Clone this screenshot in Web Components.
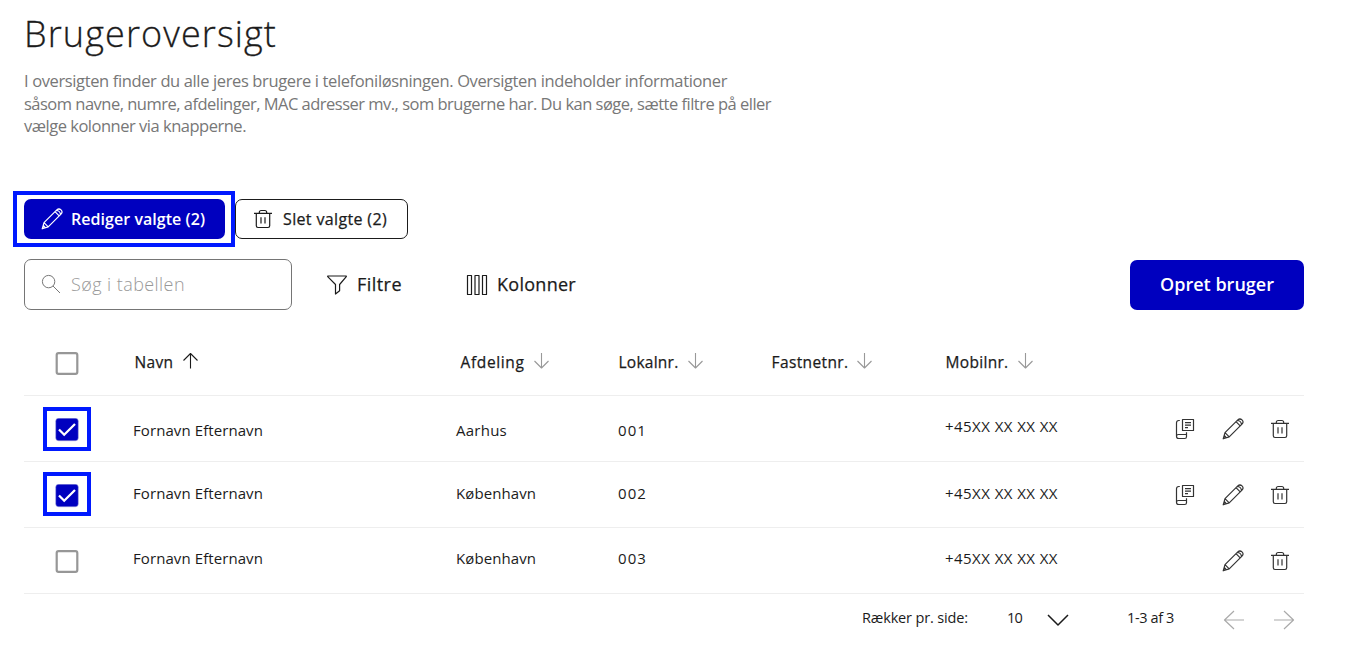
<!DOCTYPE html>
<html lang="da"><head><meta charset="utf-8"><title>Brugeroversigt</title>
<style>body{margin:0;background:#fff;color:#1b1b1b;font-family:"Open Sans","Noto Sans",sans-serif}</style></head>
<body><user-overview></user-overview>
<script>
const def=(n,html,setup)=>customElements.define(n,class extends HTMLElement{
  connectedCallback(){if(this.shadowRoot)return;const r=this.attachShadow({mode:'open'});r.innerHTML=typeof html==='function'?html(this):html;if(setup)setup(this,r)}
});

// A line of text whose tracking is adjusted to fill a given width.
def('fit-text','<style>:host{display:block;white-space:nowrap;font-variant-ligatures:none}span{display:inline-block;white-space:pre}</style><span><slot></slot></span>',(el,r)=>{
  const s=r.querySelector('span'),w=+el.getAttribute('w');
  el.style.width=w+'px';
  s.style.letterSpacing=((w-s.getBoundingClientRect().width)/el.textContent.length).toFixed(3)+'px';
});

const icons={
  pencil:[22,22,'<path d="M1.2 20.8 3 14.7 15.8 1.9a2.9 2.9 0 0 1 4.2 4.2L7.2 18.9zM3 14.7l4.2 4.2M14 3.7l4.2 4.2M15.3 2.5c2.2 0 4.1 1.8 4.1 4.1M1.5 20.5l2.8-.9-1.8-1.9z"/>'],
  trash:[20,20,'<path d="M1 4.3h18M3.3 4.5v12.3q0 1.7 1.7 1.7h10q1.7 0 1.7-1.7V4.5M6.3 4.2V3.4Q6.3 1.5 8.2 1.5h3.6q1.9 0 1.9 1.9v.8M8 8.2v6.4M12 8.2v6.4"/>'],
  book:[20,22,'<path d="M4.8 2.5H3.8Q1.5 2.5 1.5 4.8v13.4q0 2.3 2.3 2.3h5.9q1.8 0 1.8-1.8v-4.5M11.5 16.5h-8q-2 0-2 1.8M7.5 1.5h11v11h-11zM10 4.7h6M10 7.2h6M10 9.7h3"/>'],
  search:[20,20,'<circle cx="7.6" cy="7.6" r="6.2"/><path d="m12 12 7 7"/>'],
  filter:[20,20,'<path d="M.7 1h18.6v.7L12.6 9.5v6.3L8.5 19V9.5L.7 1.7z"/>'],
  columns:[22,22,'<path d="M1.5 1.5h4v19h-4zM9 1.5h4v19H9zM16.5 1.5h4v19h-4z"/>'],
  up:[16,18,'<path d="M8.5 16.5V1.5M1.5 8.5l7-7 7 7"/>'],
  down:[16,18,'<path d="M7.5 1v15M.5 9l7 7 7-7"/>'],
  chevron:[22,12,'<path d="m1 1 10 10L21 1"/>'],
  left:[22,20,'<path d="M21 10H1.5M11 1l-9.5 9 9.5 9"/>'],
  right:[22,20,'<path d="M1 10h19.5M11 1l9.5 9-9.5 9"/>']
};
def('line-icon',el=>{const [w,h,p]=icons[el.getAttribute('name')];
  return `<style>:host{display:block;flex:none;width:${w}px;height:${h}px}svg{display:block;fill:none;stroke:currentColor;stroke-width:var(--stroke,1.2);stroke-linejoin:round}</style><svg width="${w}" height="${h}" viewBox="0 0 ${w} ${h}">${p}</svg>`});

def('focus-frame','<style>:host{display:block;position:absolute;box-sizing:border-box;border:4px solid #0019ff;pointer-events:none}</style>');

def('check-box',el=>`<style>
:host{display:block;position:relative;width:24px;height:23px}
svg{display:block;fill:none}
focus-frame{left:-12px;top:-11px;width:48px;height:44px}
:host([low]) focus-frame{top:-12px}
</style><svg width="24" height="24">${el.hasAttribute('checked')?'<rect x=".7" y=".2" width="22.6" height="22.6" rx="3" fill="#0000bf" stroke="#a9a9dd" stroke-width=".5"/><path d="m4 11.5 5.2 5.2L20 6" stroke="#fff" stroke-width="2.3"/></svg><focus-frame></focus-frame>':'<rect x="1.7" y="1.2" width="20.6" height="20.6" rx="1.8" stroke="#979797" stroke-width="2.2"/></svg>'}`);

def('action-button','<style>:host{display:flex;box-sizing:border-box;align-items:center;border-radius:7px;height:40px;font-size:16px;font-weight:500;line-height:22px}:host([primary]){background:#0000bf;color:#fff;font-weight:600}:host([outline]){border:1px solid #1b1b1b;-webkit-text-stroke:.25px}</style><slot></slot>');

def('sort-heading',el=>`<style>:host{display:flex;align-items:center;gap:${el.getAttribute('gap')||10}px;font-size:15.5px;font-weight:500;-webkit-text-stroke:.25px;line-height:22px;padding-bottom:1px}
line-icon{color:#999;--stroke:1.1;margin-top:-2px}:host([active]) line-icon{color:#1b1b1b;margin-top:-3px}fit-text{position:relative;left:.5px}</style>
<fit-text w="${el.getAttribute('w')}">${el.getAttribute('label')}</fit-text><line-icon name="${el.hasAttribute('active')?'up':'down'}"></line-icon>`);

def('user-row',el=>{const a=n=>el.getAttribute(n);return `<style>
:host{display:grid;grid-template-columns:109px 323px 162px 327px 230px 129px;height:65px;border-bottom:1px solid #eee;font-size:15px;font-weight:375;line-height:20px}
check-box{margin:22px 0 0 31px}
fit-text{margin-top:${a('y')}px}.m{margin-top:${a('my')}px}
.i{display:grid;grid-template-columns:47px 48px 20px;align-items:center;padding:1px 0 0;color:#333}
</style><check-box ${el.hasAttribute('checked')?'checked':''} ${el.hasAttribute('low')?'low':''}></check-box>
<fit-text w="130">Fornavn Efternavn</fit-text><fit-text w="${a('dw')}">${a('dept')}</fit-text><fit-text w="29">${a('no')}</fit-text>
<fit-text class="m" w="113">+45XX XX XX XX</fit-text>
<div class="i">${el.hasAttribute('checked')?'<line-icon name="book"></line-icon>':'<span></span>'}<line-icon name="pencil"></line-icon><line-icon name="trash"></line-icon></div>`});

def('user-table',`<style>:host{display:block;width:1280px}
.h{display:grid;grid-template-columns:110px 326px 158px 153px 174px 359px;height:65px;align-items:center;border-bottom:1px solid #eee}
.h check-box{margin:1px 0 0 31px}
</style><div class="h"><check-box></check-box>
<sort-heading active label="Navn" w="39" gap="9"></sort-heading><sort-heading label="Afdeling" w="64"></sort-heading><sort-heading label="Lokalnr." w="60"></sort-heading><sort-heading label="Fastnetnr." w="77" gap="9"></sort-heading><sort-heading label="Mobilnr." w="63" gap="10"></sort-heading></div>
<user-row checked dept="Aarhus" dw="51" no="001" y="24" my="20"></user-row>
<user-row checked low dept="København" dw="80" no="002" y="21" my="21"></user-row>
<user-row dept="København" dw="80" no="003" y="20" my="20"></user-row>`);

def('page-controls',`<style>:host{display:flex;align-items:center;height:50px;width:1280px;font-size:14.5px;font-weight:375;line-height:20px}
fit-text{margin-top:-2px}.a{margin-left:838px}.b{margin-left:39px}.c{margin-left:25px;margin-top:2px;--stroke:1.5}.d{margin-left:58px}.e{margin:2px 0 0 49px;color:#aaa}.f{margin:2px 0 0 28px;color:#aaa}</style>
<fit-text class="a" w="106">Rækker pr. side:</fit-text><fit-text class="b" w="15">10</fit-text><line-icon class="c" name="chevron"></line-icon><fit-text class="d" w="47">1-3 af 3</fit-text><line-icon class="e" name="left"></line-icon><line-icon class="f" name="right"></line-icon>`);

def('search-field',`<style>:host{display:flex;box-sizing:border-box;align-items:center;gap:10px;width:268px;height:51px;padding:0 0 2px 16px;border:1px solid #757575;border-radius:7px;color:#999;font-size:18px;font-weight:300}line-icon{color:#777;--stroke:1}</style><line-icon name="search"></line-icon><fit-text w="114">Søg i tabellen</fit-text>`);

def('user-overview',`<style>
:host{display:block;box-sizing:border-box;height:665px;padding:9px 0 0 24px;overflow:hidden}
h1{margin:0;font-size:36px;line-height:50px;font-weight:300;-webkit-text-stroke:.3px;height:61px}
.d{color:#777;font-size:16.5px;font-weight:400;line-height:22.5px;height:129px}
.s{display:flex;gap:10px;height:60px}.r{position:relative}
.r focus-frame{left:-11px;top:-8px;width:222px;height:56px}
.t{display:flex;align-items:center;height:51px;width:1280px;font-size:18px;font-weight:500;line-height:24px}
.t action-button{height:50px;width:174px;margin:1px 0 0 auto;font-size:18px;padding:0 0 2px 30px;box-sizing:border-box}
.g{display:flex;align-items:center;-webkit-text-stroke:.25px}.g fit-text{margin-top:-2px}
user-table{margin-top:20px}
</style>
<h1><fit-text w="253">Brugeroversigt</fit-text></h1>
<div class="d"><fit-text w="703">I oversigten finder du alle jeres brugere i telefoniløsningen. Oversigten indeholder informationer</fit-text><fit-text w="747">såsom navne, numre, afdelinger, MAC adresser mv., som brugerne har. Du kan søge, sætte filtre på eller</fit-text><fit-text w="222">vælge kolonner via knapperne.</fit-text></div>
<div class="s"><div class="r"><action-button primary style="width:201px;padding-left:17px;gap:8px"><line-icon name="pencil"></line-icon><fit-text w="134">Rediger valgte (2)</fit-text></action-button><focus-frame></focus-frame></div>
<action-button outline style="width:173px;padding-left:17px;gap:10px"><line-icon name="trash"></line-icon><fit-text w="104">Slet valgte (2)</fit-text></action-button></div>
<div class="t"><search-field></search-field><div class="g" style="margin-left:35px;gap:10px"><line-icon name="filter"></line-icon><fit-text w="45">Filtre</fit-text></div><div class="g" style="margin-left:64px;gap:9px"><line-icon name="columns"></line-icon><fit-text w="79">Kolonner</fit-text></div>
<action-button primary><fit-text w="114">Opret bruger</fit-text></action-button></div>
<user-table></user-table><page-controls></page-controls>`);
</script></body></html>
